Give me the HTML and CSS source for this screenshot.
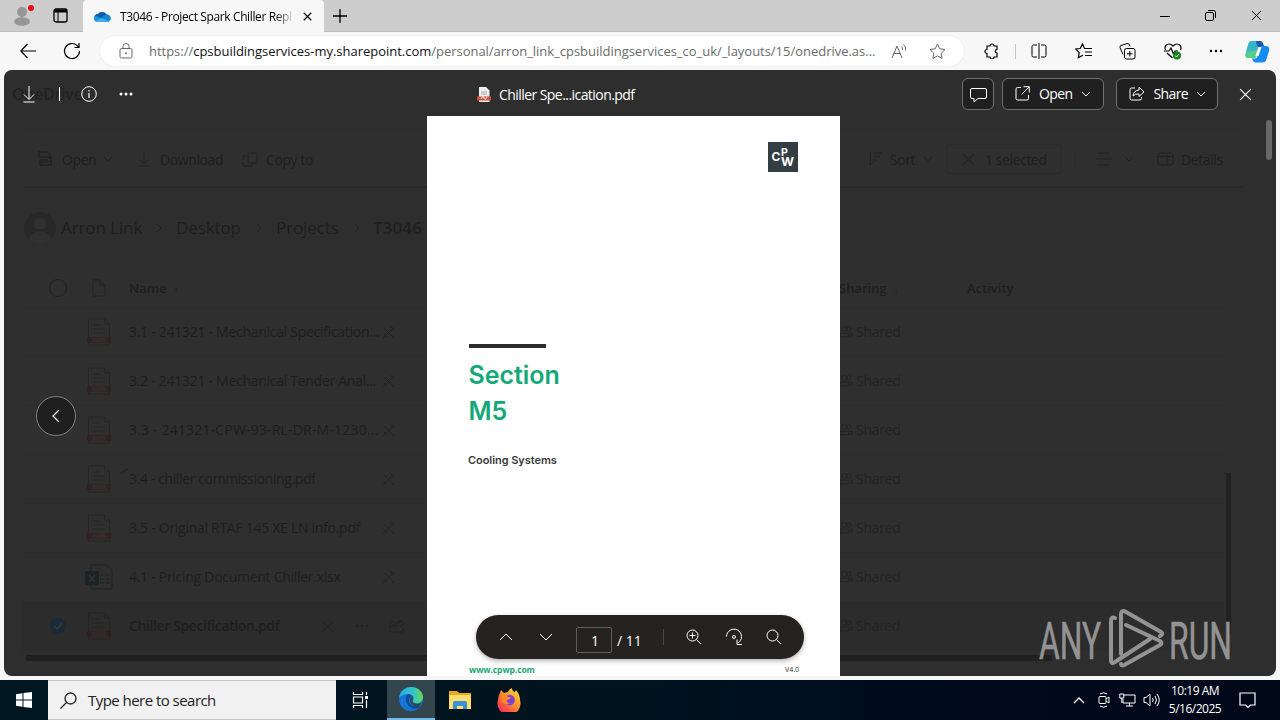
FILE: index.html
```html
<!DOCTYPE html>
<html lang="en">

<head>
    <meta charset="UTF-8">
    <title>T3046 - Project Spark Chiller Repl</title>
    <link rel="stylesheet" href="styles.css">
</head>

<body>
    <svg xmlns="http://www.w3.org/2000/svg" style="display: none;">
        <symbol id="chevron-down" viewBox="0 0 10 10"><path d="M1 3l4 4 4-4"/></symbol>
        <symbol id="chevron-right" viewBox="0 0 10 10"><path d="M3 1l4 4-4 4"/></symbol>
        <symbol id="close" viewBox="0 0 12 12"><path d="M1 1l10 10M11 1L1 11"/></symbol>
        <symbol id="download" viewBox="0 0 16 18"><path d="M8 1v13M3 9.500l5 5 5-5M2.500 17h11"/></symbol>
        <symbol id="pdf" viewBox="0 0 24 28">
            <path d="M1.500 1h16l5 5v21h-21zM17.500 1v5h5M6 7h8M6 11h12M6 15h12"/>
            <path class="pdf-band" d="M0 19h5v6H0zM19 19h5v6h-5z"/>
            <path class="pdf-mark" d="M5 19.500h14v5H5zM8 23c2-3 3-3 4 0s3 1 4-1"/>
        </symbol>
        <symbol id="pen" viewBox="0 0 14 14"><path d="M1 13L12 2M2 3l10 10M8 1l4 4M2 9l3 3"/></symbol>
        <symbol id="people" viewBox="0 0 16 14"><circle cx="6" cy="4" r="3"/><circle cx="11" cy="4" r="2.500"/><path d="M1 13V9h10v4zM12 9h3v3h-3"/></symbol>
    </svg>

    <div class="tabstrip">
        <div class="profile">
            <svg width="18" height="20" viewBox="0 0 18 20"><circle cx="9" cy="6" r="5" fill="#969696"/><ellipse cx="9" cy="15.500" rx="8" ry="4.300" fill="#969696"/></svg>
            <span class="profile-dot"></span>
        </div>
        <svg class="line tab-actions" width="15" height="15" viewBox="0 0 15 15"><rect x="1" y="1" width="13" height="13" rx="2" stroke-width="1.300"/><path d="M1 3h13" stroke-width="3"/><path d="M5 3v11"/></svg>
        <div class="tab">
            <svg width="17" height="12" viewBox="0 0 17 12"><path d="M4 4a5 4.500 0 0 1 8.500.500A3.700 3.700 0 0 1 13 12H4A4 4 0 0 1 4 4z" fill="#1490df"/><path d="M4 4a5 4.500 0 0 1 8.500.500L7 8 1 5.500A4 4 0 0 1 4 4z" fill="#0f5cab"/><path d="M7 8l5.500-3.500A3.700 3.700 0 0 1 16 10z" fill="#1683d3"/><path d="M2 11l5-3 8 3-2 1H4z" fill="#36b0ef"/></svg>
            <span class="tab-title">T3046 - Project Spark Chiller Repl</span>
            <svg class="line" width="9" height="9" stroke-width="1.600"><use href="#close"/></svg>
        </div>
        <svg class="line new-tab" width="14" height="14" viewBox="0 0 14 14"><path d="M7 0v14M0 7h14" stroke-width="1.300"/></svg>
        <div class="window-buttons">
            <svg class="line" width="10" height="10" viewBox="0 0 10 10"><path d="M0 5.500h10"/></svg>
            <svg class="line" width="11" height="11" viewBox="0 0 11 11"><rect x=".5" y="2.500" width="8" height="8" rx="1.500"/><path d="M3 .5h5.500a2 2 0 0 1 2 2V8"/></svg>
            <svg class="line" width="11" height="11"><use href="#close"/></svg>
        </div>
    </div>

    <div class="navbar">
        <svg class="line back" width="16" height="16" viewBox="0 0 16 16"><path d="M16 8H.8M7.500 1L.8 8l6.700 7" stroke-width="1.200"/></svg>
        <svg class="line reload" width="18" height="18" viewBox="0 0 18 18"><path d="M16.500 9a7.500 7.500 0 1 1-2.300-5.400L16 5.500M16 1v4.500h-4.500" stroke-width="1.200"/></svg>
        <div class="address">
            <svg class="line grey" width="14" height="16" viewBox="0 0 14 16"><rect x="1" y="5.500" width="12" height="9.500" rx="1.500"/><path d="M4 5.500V3.500a3 3 0 0 1 6 0v2"/><circle cx="7" cy="10.300" r=".6" fill="#666"/></svg>
            <span class="url">https://<b>cpsbuildingservices-my.sharepoint.com</b>/personal/arron_link_cpsbuildingservices_co_uk/_layouts/15/onedrive.as...</span>
            <svg class="line grey" width="16" height="16" viewBox="0 0 16 16"><path d="M1 15L6 3l5 12M2.800 10.500h6.500M10.500 3.500q1.500 1.500 1 3.500M12.500 1.500q3 2.500 2 6"/></svg>
            <svg class="line grey star" width="17" height="17" viewBox="0 0 17 17"><path d="M8.500 1l2.300 4.800 5.200.7-3.800 3.700.9 5.200-4.600-2.500-4.600 2.500.9-5.200L1 6.500l5.200-.7z"/></svg>
        </div>
        <div class="nav-icons">
            <svg class="line" width="16" height="16" viewBox="0 0 16 16"><path d="M4 3h3a2 2 0 0 1 4 0h3v3.500a1.700 1.700 0 0 0 0 3.500v4H11a2 2 0 0 1-4 0H4v-3.500a2 2 0 1 1 0-4z" stroke-width="1.200"/></svg>
            <span class="nav-sep"></span>
            <svg class="line" width="16" height="16" viewBox="0 0 16 16"><path d="M6 2H2.500Q1 2 1 3.500v9Q1 14 2.500 14H6M10 2h3.500Q15 2 15 3.500v9q0 1.500-1.500 1.500H10M8 0v16"/></svg>
            <svg class="line" width="17" height="16" viewBox="0 0 17 16"><path d="M13 5.500H9.500L7.500 1 5.200 5.500.8 6l3.400 3.600-.9 5L8 12.300M10 9h7M10 12.500h7M12 5.500h5" stroke-width="1.200"/></svg>
            <svg class="line" width="17" height="17" viewBox="0 0 17 17"><rect x="5.500" y="5.500" width="10.500" height="10.500" rx="2"/><path d="M4 11.500L1 4.500Q.5 3 2 2.500L8 .6Q10 0 10.500 2l.5 1.500M10.800 8v5.500M8 10.800h5.500"/></svg>
            <svg class="line" width="18" height="17" viewBox="0 0 18 17"><path d="M1.500 7C0 3.500 2.500 1 5 1c2 0 3 1 4 2 1-1 2-2 4-2 2.500 0 5 2.500 3.500 6M0 8h5l2-3 2.500 6L11 8h3M3 10l5.500 5" stroke-width="1.200"/><circle cx="13" cy="12.500" r="4" fill="#16821a" stroke="none"/><path d="M11 12.500l1.500 1.500 2.500-3" stroke="#fff"/></svg>
            <svg width="14" height="4" viewBox="0 0 14 4"><circle cx="2" cy="2" r="1.200"/><circle cx="7" cy="2" r="1.200"/><circle cx="12" cy="2" r="1.200"/></svg>
            <svg class="copilot" width="25" height="23" viewBox="0 0 25 23">
                <path d="M6 1h9q2.500 0 3.500 4l.8 2H15l-3.500 9.500Q10.500 18 8 18H3Q-.5 18 .8 13L3.500 3Q4.300 1 6 1z" fill="#35b6c6"/>
                <path d="M11 1h4q2.500 0 3.500 4l.8 2H13q-2-4-2-6z" fill="#1958ad"/>
                <path d="M1 12q-1 6 2 6h5q2.500 0 3.500-2L13 10z" fill="#58cc8b"/>
                <path d="M16 6h5q4 0 3 5l-2.500 8q-1 3.500-4 3.500H11q-3 0-4-4h3q2 0 3-3z" fill="#168cf0"/>
                <path d="M13.500 7h3l-3 9h-3z" fill="#fff"/>
            </svg>
        </div>
    </div>

    <div class="viewport">
        <!-- OneDrive folder, dimmed behind the file viewer -->
        <div class="folder">
            <div class="brand">OneDrive</div>
            <div class="commands">
                <svg class="line" width="16" height="16" viewBox="0 0 16 16"><path d="M2 6V1h8l3 3v4M2 6h12v8H3V9h8M3 11h9" stroke-width="1.500"/></svg>
                <span class="cmd-open">Open</span>
                <svg class="line cmd-chev" width="10" height="10"><use href="#chevron-down"/></svg>
                <svg class="line cmd-dl" width="14" height="16"><use href="#download"/></svg>
                <span class="cmd-download">Download</span>
                <svg class="line cmd-cp" width="16" height="15" viewBox="0 0 16 15"><rect x="6" y="1" width="9" height="10" rx="1.500"/><path d="M4 4H1v4M1 10v4h9v-2"/></svg>
                <span class="cmd-copy">Copy to</span>
                <div class="commands-right">
                    <svg class="line" width="14" height="14" viewBox="0 0 14 14"><path d="M2.500 0v13M0 10.500L2.500 13 5 10.500M5 1h9M5 4.500h7M5 8h4"/></svg>
                    <span class="cmd-sort">Sort</span>
                    <svg class="line" width="10" height="10"><use href="#chevron-down"/></svg>
                    <span class="selected-count"><svg class="line" width="13" height="13"><use href="#close"/></svg>1 selected</span>
                    <span class="cmd-sep"></span>
                    <svg class="line" width="16" height="14" viewBox="0 0 16 14"><path d="M1 1h12M0 7h16M1 13h12"/></svg>
                    <svg class="line cmd-view" width="10" height="10"><use href="#chevron-down"/></svg>
                    <svg class="line" width="17" height="14" viewBox="0 0 17 14"><rect x="1" y="1" width="15" height="12" rx="2"/><path d="M10 1v12M1 4.500h15M12 8h2"/></svg>
                    <span class="cmd-details">Details</span>
                </div>
            </div>
            <div class="crumbs">
                <svg width="32" height="32" viewBox="0 0 32 32"><circle cx="16" cy="16" r="16" fill="#282828"/><circle cx="16" cy="12" r="6" fill="#303030"/><path d="M5 27q2-8 11-8t11 8q-5 5-11 5T5 27z" fill="#303030"/></svg>
                <span class="crumb-user">Arron Link</span>
                <svg class="line" width="10" height="10"><use href="#chevron-right"/></svg>
                <span class="crumb-desktop">Desktop</span>
                <svg class="line" width="10" height="10"><use href="#chevron-right"/></svg>
                <span class="crumb-projects">Projects</span>
                <svg class="line" width="10" height="10"><use href="#chevron-right"/></svg>
                <b>T3046</b>
            </div>
            <div class="files">
                <div class="row head">
                    <svg class="line" width="18" height="18" viewBox="0 0 18 18"><circle cx="9" cy="9" r="8.500"/></svg>
                    <svg class="line doc-col" width="14" height="18" viewBox="0 0 14 18"><path d="M1 2q0-1 1-1h6l5 5v10q0 1-1 1H2q-1 0-1-1zM8 1v5h5"/></svg>
                    <span>Name <small>&#8593;</small></span><i></i><span>Sharing <small>&#8595;</small></span><span>Activity</span>
                </div>
                <div class="row"><i></i><svg class="pdf" width="24" height="28"><use href="#pdf"/></svg><span>3.1 - 241321 - Mechanical Specification...</span><svg class="line" width="14" height="14"><use href="#pen"/></svg><span class="shared"><svg class="line" width="14" height="13"><use href="#people"/></svg>Shared</span></div>
                <div class="row"><i></i><svg class="pdf" width="24" height="28"><use href="#pdf"/></svg><span>3.2 - 241321 - Mechanical Tender Anal...</span><svg class="line" width="14" height="14"><use href="#pen"/></svg><span class="shared"><svg class="line" width="14" height="13"><use href="#people"/></svg>Shared</span></div>
                <div class="row"><i></i><svg class="pdf" width="24" height="28"><use href="#pdf"/></svg><span class="wide">3.3 - 241321-CPW-93-RL-DR-M-1230...</span><svg class="line" width="14" height="14"><use href="#pen"/></svg><span class="shared"><svg class="line" width="14" height="13"><use href="#people"/></svg>Shared</span></div>
                <div class="row"><i></i><svg class="pdf" width="24" height="28"><use href="#pdf"/></svg><span class="fresh">3.4 - chiller commissioning.pdf</span><svg class="line" width="14" height="14"><use href="#pen"/></svg><span class="shared"><svg class="line" width="14" height="13"><use href="#people"/></svg>Shared</span></div>
                <div class="row"><i></i><svg class="pdf" width="24" height="28"><use href="#pdf"/></svg><span>3.5 - Original RTAF 145 XE LN info.pdf</span><svg class="line" width="14" height="14"><use href="#pen"/></svg><span class="shared"><svg class="line" width="14" height="13"><use href="#people"/></svg>Shared</span></div>
                <div class="row"><i></i><svg class="xls" width="28" height="28" viewBox="0 0 28 28"><path d="M6 2h15l6 5v19H6zM15 12h4M21 12h4M15 16h4M21 16h4M15 20h4M21 20h4" fill="none" stroke="#222"/><rect y="8" width="14" height="14" rx="1" fill="#1b2425"/><path d="M4 12l6 7M10 12l-6 7" stroke="#343434" stroke-width="1.500"/></svg><span>4.1 - Pricing Document Chiller.xlsx</span><svg class="line" width="14" height="14"><use href="#pen"/></svg><span class="shared"><svg class="line" width="14" height="13"><use href="#people"/></svg>Shared</span></div>
                <div class="row picked"><svg class="tick" width="16" height="16" viewBox="0 0 16 16"><circle cx="8" cy="8" r="8" fill="#1a2a36"/><path d="M4 8l3 3 5-6" fill="none" stroke="#3a3a3a" stroke-width="1.500"/></svg><svg class="pdf" width="24" height="28"><use href="#pdf"/></svg><span>Chiller Specification.pdf</span>
                    <span class="row-tools"><svg class="line" width="14" height="14"><use href="#pen"/></svg><svg class="line" width="14" height="4" viewBox="0 0 14 4"><path d="M1 2h2M6 2h2M11 2h2" stroke-width="2"/></svg><svg class="line" width="16" height="14" viewBox="0 0 16 14"><path d="M5 3H1v10h13V9M1 7h8M5 7q1-4 6-4V1l4 4-4 3V6"/></svg></span>
                    <span class="shared"><svg class="line" width="14" height="13"><use href="#people"/></svg>Shared</span></div>
            </div>
            <div class="scroll-x"></div>
            <div class="scroll-y"></div>
        </div>

        <div class="viewer">
            <div class="viewer-bar">
                <svg class="line" width="16" height="18"><use href="#download"/></svg>
                <span class="bar-sep"></span>
                <svg class="line" width="16" height="16" viewBox="0 0 16 16"><circle cx="8" cy="8" r="7.300"/><path d="M8 7v5M8 4v1.500" stroke-width="1.200"/></svg>
                <svg class="bar-more" width="14" height="4" viewBox="0 0 14 4" fill="#fff"><circle cx="2" cy="2" r="1.500"/><circle cx="7" cy="2" r="1.500"/><circle cx="12" cy="2" r="1.500"/></svg>
                <div class="file-title">
                    <svg width="14" height="15" viewBox="0 0 14 15"><path d="M2 0h7l3.500 3.500V15H2z" fill="#eee"/><path d="M4 5h6M4 7h6" stroke="#aaa"/><path d="M0 9.500h14v4H0z" fill="#cd5136"/><path d="M4 12q2-4 3-1t3-1" fill="none" stroke="#fff"/></svg>
                    <span>Chiller Spe...ication.pdf</span>
                </div>
                <div class="viewer-actions">
                    <button class="btn btn-comment"><svg class="line" width="17" height="16" viewBox="0 0 17 16"><path d="M2 1.500h13q1.500 0 1.500 1.500v7q0 1.500-1.500 1.500H8l-4 3.500v-3.500H2Q.5 11.500.5 10V3Q.5 1.500 2 1.500z"/></svg></button>
                    <button class="btn btn-open"><svg class="line" width="15" height="15" viewBox="0 0 15 15"><path d="M6 1.500H2.500Q1 1.500 1 3v9.500Q1 14 2.500 14H12q1.500 0 1.500-1.500V9M8.500.7h5.800v5.800M14 1L6.500 8.500"/></svg><span>Open</span><svg class="line" width="10" height="10"><use href="#chevron-down"/></svg></button>
                    <button class="btn btn-share"><svg class="line" width="16" height="15" viewBox="0 0 16 15"><path d="M6 2H2.500Q1 2 1 3.500v9Q1 14 2.500 14H11q1.500 0 1.500-1.500V11M4 10q.5-5.500 6-6V1.200l5 4.800-5 4.500V8Q6 7.500 4 10z"/></svg><span>Share</span><svg class="line" width="10" height="10"><use href="#chevron-down"/></svg></button>
                    <svg class="line" width="13" height="13"><use href="#close"/></svg>
                </div>
            </div>
            <div class="paper">
                <svg class="cpw" width="30" height="30" viewBox="0 0 30 30"><rect width="30" height="30" fill="#333d44"/><text x="3.500" y="19" font-size="12">C</text><text x="13" y="14" font-size="10.500">P</text><text x="13" y="24" font-size="11.500" textLength="13" lengthAdjust="spacingAndGlyphs">W</text></svg>
                <div class="rule"></div>
                <h1>Section<br>M5</h1>
                <h2>Cooling Systems</h2>
                <div class="paper-foot"><b>www.cpwp.com</b><span>V4.0</span></div>
            </div>
            <button class="previous"><svg class="line" width="8" height="12" viewBox="0 0 8 12"><path d="M7 0L1 6l6 6" stroke-width="1.200"/></svg></button>
            <div class="pager">
                <svg class="line" width="14" height="14" viewBox="0 0 14 14"><path d="M1 10l6-6 6 6"/></svg>
                <svg class="line pager-down" width="14" height="14" viewBox="0 0 14 14"><path d="M1 4l6 6 6-6"/></svg>
                <span class="page-number">1</span>
                <span class="page-total">/ 11</span>
                <span class="pager-sep"></span>
                <svg class="line" width="16" height="16" viewBox="0 0 16 16"><circle cx="6.500" cy="6.500" r="5.500"/><path d="M10.500 10.500L15 15M3.500 6.500h6M6.500 3.500v6"/></svg>
                <svg class="line pager-rotate" width="18" height="18" viewBox="0 0 18 18"><path d="M1.500 8.500a7.500 7.500 0 1 1 11.500 6.500M12 11.500v5h5"/><circle cx="9" cy="9" r="1.500"/></svg>
                <svg class="line" width="16" height="16" viewBox="0 0 16 16"><circle cx="6.500" cy="6.500" r="5.500"/><path d="M10.500 10.500L15 15"/></svg>
            </div>
            <div class="viewer-scroll"></div>
        </div>

        <svg class="watermark" width="200" height="66" viewBox="0 0 200 66">
            <text x="1" y="52" textLength="62" lengthAdjust="spacingAndGlyphs">ANY</text>
            <text x="131" y="52" textLength="63" lengthAdjust="spacingAndGlyphs">RUN</text>
            <path d="M77 11q-4-2-4 3v39q0 5 4 2l35-23M83 47V8q0-6 5-3l35 20q3 2-1 4M88 18l34 16q3 2 0 4L88 57q-4 3-5 0"/>
        </svg>
    </div>

    <div class="taskbar">
        <div class="start"><svg width="16" height="16" viewBox="0 0 16 16" fill="#fff"><path d="M0 2.200L6.500 1.300v6.200H0zM7.500 1.100L16 0v7.500H7.500zM0 8.500h6.500v6.200L0 13.800zM7.500 8.500H16V16l-8.500-1.100z"/></svg></div>
        <div class="search"><svg class="line" width="17" height="17" viewBox="0 0 17 17"><circle cx="10.500" cy="6.500" r="5.500" stroke-width="1.300"/><path d="M6.500 10.500L.5 16.500" stroke-width="1.300"/></svg><span>Type here to search</span></div>
        <div class="task task-view"><svg class="line" width="17" height="16" viewBox="0 0 17 16"><path d="M1.500 0v2.500h9V0M1.500 16v-2.500h9V16M1.500 5h9v6h-9zM14.500 0v3M14.500 8v8" stroke-width="1.200"/><path d="M13 4h3v3h-3z" fill="#fff" stroke="none"/></svg></div>
        <div class="task active">
            <svg width="24" height="24" viewBox="0 0 24 24">
                <defs><linearGradient id="edge-top"><stop offset="0" stop-color="#24a9e8"/><stop offset=".6" stop-color="#35c5c2"/><stop offset="1" stop-color="#65dc55"/></linearGradient></defs>
                <circle cx="12" cy="12" r="12" fill="#1476d4"/>
                <path d="M0 11C1 4 6 0 12 0c7 0 12 5 12 10 0 4-3 6.500-7 6.500-3 0-4-1.500-3-3 2-4-1-6.500-5-6.500-4 0-7 1-9 4z" fill="url(#edge-top)"/>
                <path d="M9 7c-4 3-3 13 7 15q4-1 6-4-7 3-11-1-3-4 1-8-1-2-3-2z" fill="#114a9a"/>
                <path d="M13 9c2 2 0 4 .5 6q3 3 8 1l1.500.5Q20 20 16 19q-5-1-5-6 0-2 2-4z" fill="#35474e"/>
            </svg>
        </div>
        <div class="task"><svg width="22" height="18" viewBox="0 0 22 18"><path d="M0 0h8l2 2h12v16H0z" fill="#e9a820"/><path d="M0 4h22v14H0z" fill="#ffdc70"/><path d="M4 18v-6q0-2 2-2h10q2 0 2 2v6h-4v-3H8v3z" fill="#3b91d4"/></svg></div>
        <div class="task"><svg width="24" height="24" viewBox="0 0 24 24">
                <defs><linearGradient id="fox" x1="1" y1="0" x2=".2" y2="1"><stop offset="0" stop-color="#ffe83d"/><stop offset=".45" stop-color="#ff9827"/><stop offset="1" stop-color="#f4245c"/></linearGradient></defs>
                <path d="M3 5l1-3 3 3 4-1q1-3 4-4 0 3 3 4l1-2q4 5 4 10a11.500 11.500 0 1 1-22 0q0-4 2-7z" fill="url(#fox)"/><circle cx="12.500" cy="12" r="5.300" fill="#8040d4"/><path d="M5 8q4-2 6 1l3 .5q-1 2-4 2.500-1 3 3 3.500-4 2-7-1-2-3-1-6.500z" fill="#ff8b22"/></svg></div>
        <div class="tray">
            <svg class="line" width="12" height="8" viewBox="0 0 12 8"><path d="M1 7l5-5 5 5" stroke-width="1.300"/></svg>
            <svg class="line tray-cam" width="12" height="16" viewBox="0 0 12 16"><rect x="1" y="4.500" width="7" height="7" rx="1"/><path d="M8 7l3-2v6L8 9M2 2q3.500-2.500 7 0M2 14q3.500 2.500 7 0"/></svg>
            <svg class="line tray-net" width="17" height="14" viewBox="0 0 17 14"><path d="M5 2h11v8H4V6M7 13h7M10.500 10v3M.8 1h4v4h-4zM2.800 5v5"/></svg>
            <svg class="line tray-vol" width="17" height="14" viewBox="0 0 17 14"><path d="M1 4.500h2L7 1v12L3 9.500H1zM9.500 5q1.500 2 0 4M12 3q3 4 0 8M14 1q4.500 6 0 12"/></svg>
            <div class="clock">10:19 AM<br>5/16/2025</div>
            <svg class="line tray-note" width="17" height="17" viewBox="0 0 17 17"><path d="M1 1h15v12h-4.500L9 15.500 6.500 13H1z" stroke-width="1.200"/></svg>
        </div>
    </div>
</body>

</html>
```
FILE: styles.css
```css
body,
html {
    margin: 0;
    height: 100%;
    overflow: hidden;
    font-family: 'Open Sans', 'Noto Sans', sans-serif;
    font-size: 13px;
    background: #f7f7f7;
}

* {
    box-sizing: border-box;
}

body {
    display: flex;
    flex-direction: column;
}

svg {
    flex: none;
}

.line {
    fill: none;
    stroke: currentColor;
}

/* browser chrome */
.tabstrip {
    display: flex;
    align-items: center;
    height: 32px;
    background: #cdcdcd;
    border-bottom: 1px solid #bdbdbd;
}

.profile {
    position: relative;
    display: flex;
    margin-left: 13px;
}

.profile-dot {
    position: absolute;
    top: -1px;
    right: -3px;
    width: 6px;
    height: 6px;
    border-radius: 50%;
    background: #e80b15;
}

.tab-actions {
    margin-left: 22px;
}

.tab {
    display: flex;
    align-items: center;
    align-self: stretch;
    width: 241px;
    height: 32px;
    margin-left: 15px;
    padding-left: 11px;
    background: #f7f7f7;
    border-radius: 4px 4px 0 0;
}

.tab-title {
    width: 173px;
    margin-left: 9px;
    margin-right: 10px;
    overflow: hidden;
    white-space: nowrap;
    font-size: 12px;
    letter-spacing: -.38px;
    -webkit-mask-image: linear-gradient(90deg, #000 155px, transparent 175px);
    mask-image: linear-gradient(90deg, #000 155px, transparent 175px);
}

.new-tab {
    margin-left: 9px;
}

.window-buttons {
    display: flex;
    align-items: center;
    gap: 35px;
    margin-left: auto;
    margin-right: 18px;
}

.navbar {
    display: flex;
    align-items: center;
    height: 38px;
}

.back {
    margin-left: 20px;
}

.reload {
    margin-left: 27px;
}

.address {
    display: flex;
    align-items: center;
    width: 864px;
    height: 30px;
    margin-left: 19px;
    padding-left: 19px;
    border-radius: 15px;
    background: #fff;
    box-shadow: 0 0 2px #ddd;
}

.grey {
    color: #666;
}

.url {
    width: 728px;
    margin: 0 14px 0 16px;
    white-space: nowrap;
    color: #6b6b6b;
    letter-spacing: -.02px;
}

.url b {
    font-weight: 400;
    color: #111;
}

.star {
    margin-left: 22px;
}

.nav-icons {
    display: flex;
    align-items: center;
    gap: 27.5px;
    margin-left: 19px;
}

.nav-sep {
    width: 1px;
    height: 15px;
    margin: 0 -12px 0 -12px;
    background: #c5c5c5;
}

.copilot {
    margin-left: -6px;
}

/* page area */
.viewport {
    position: relative;
    height: 606px;
    margin: 0 4px 4px;
    overflow: hidden;
    border-radius: 8px;
    background: #2e2e2e;
}

.folder {
    height: 100%;
    color: #1e1e1e;
    font-size: 14px;
}

.folder .line {
    color: #222;
}

.brand {
    height: 62px;
    padding: 12px 0 0 8px;
    font-size: 16px;
    line-height: 24px;
    font-weight: 600;
    letter-spacing: -.3px;
    color: #222;
}

.commands {
    display: flex;
    align-items: center;
    width: 1222px;
    height: 56px;
    margin-left: 18px;
    padding-left: 15px;
    border-radius: 4px;
    border-bottom: 2px solid #2b2b2b;
    background: #2f2f2f;
    letter-spacing: -.4px;
}

.cmd-open {
    width: 34px;
    margin-left: 9px;
}

.cmd-chev {
    margin-left: 7px;
}

.cmd-dl {
    margin-left: 24px;
}

.cmd-download {
    width: 63px;
    margin-left: 9px;
}

.cmd-cp {
    margin-left: 19px;
}

.cmd-copy {
    margin-left: 8px;
}

.commands-right {
    display: flex;
    align-items: center;
    margin-left: auto;
    padding-right: 21px;
}

.cmd-sort {
    width: 26px;
    margin: 0 7px 0 8px;
}

.selected-count {
    display: flex;
    align-items: center;
    gap: 10px;
    width: 116px;
    height: 30px;
    margin: 0 13px;
    padding-left: 15px;
    border: 1px solid #2b2b2b;
    border-radius: 4px;
}

.cmd-sep {
    width: 1px;
    height: 28px;
    margin-right: 20px;
    background: #2b2b2b;
}

.cmd-view {
    margin: 0 23px 0 12px;
}

.cmd-details {
    width: 42px;
    margin-left: 7px;
}

.crumbs {
    display: flex;
    align-items: center;
    height: 76px;
    padding: 3px 0 0 20px;
    font-size: 17px;
    letter-spacing: -.1px;
}

.crumbs span {
    margin-right: 14px;
    white-space: nowrap;
}

.crumbs .line {
    margin-right: 12px;
}

.crumb-user {
    width: 79px;
    margin-left: 5px;
}

.crumb-desktop {
    width: 64px;
}

.crumb-projects {
    width: 62px;
}

.crumbs b {
    margin-left: -1px;
    font-weight: 600;
    letter-spacing: .1px;
}

.files {
    width: 1202px;
    margin-left: 18px;
    border-radius: 4px;
    background: #2f2f2f;
}

.row {
    display: grid;
    grid-template-columns: 39px 42px 253px 457px 128px auto;
    align-items: center;
    height: 49px;
    padding: 0 0 1px 26px;
    border-bottom: 1px solid #2c2c2c;
    letter-spacing: -.28px;
    white-space: nowrap;
}

.head {
    height: 44px;
    padding-top: 5px;
    font-weight: 600;
    font-size: 13px;
    letter-spacing: 0;
}

.head small {
    margin-left: 4px;
    font-size: 8px;
}

.head svg:first-child {
    margin-left: 1px;
}

.doc-col {
    margin-left: 5px;
}

.pdf {
    fill: none;
    stroke: #222;
    opacity: .7;
}

.pdf-band {
    fill: #331c1e;
    stroke: none;
}

.pdf-mark {
    stroke: #3b2223;
}

.xls {
    margin-left: -2px;
}

.wide {
    letter-spacing: .18px;
}

.fresh {
    letter-spacing: -.38px;
}

.fresh::before {
    content: '';
    float: left;
    width: 8px;
    margin: 1px 0 0 -8px;
    border-top: 1px solid #202020;
    transform: rotate(-30deg);
}

.shared {
    display: flex;
    align-items: center;
    gap: 3px;
    color: #232323;
}

.picked {
    background: #2c2c2c;
    font-weight: 600;
    letter-spacing: -.38px;
}

.picked .shared {
    font-weight: 400;
}

.tick {
    margin-left: 2px;
}

.row-tools {
    display: flex;
    align-items: center;
    gap: 20px;
    margin-left: -61px;
}

.scroll-x,
.scroll-y {
    position: absolute;
    background: #212121;
}

.scroll-x {
    left: 22px;
    bottom: 15px;
    width: 1026px;
    height: 6px;
}

.scroll-y {
    right: 45px;
    top: 403px;
    width: 5px;
    height: 162px;
}

/* file viewer laid over the folder */
.viewer {
    position: absolute;
    inset: 0;
    color: #fff;
}

.viewer-bar {
    display: flex;
    align-items: center;
    height: 46px;
    padding: 2px 24px 0 17px;
}

.bar-sep {
    width: 1px;
    height: 14px;
    margin: 0 21px 0 22px;
    background: #fff;
}

.bar-more {
    margin-left: 22px;
}

.file-title {
    display: flex;
    align-items: center;
    gap: 8px;
    margin-left: 344px;
    font-size: 14px;
    letter-spacing: -.56px;
}

.viewer-actions {
    display: flex;
    align-items: center;
    margin-left: auto;
}

.btn {
    display: flex;
    align-items: center;
    justify-content: center;
    height: 32px;
    padding: 0 0 1px;
    border: 1px solid #707070;
    border-radius: 6px;
    background: #202020;
    color: #fff;
    font: 14px 'Open Sans', sans-serif;
    letter-spacing: -.6px;
}

.btn span {
    width: 34px;
    margin: 0 8px 0 9px;
    text-align: left;
}

.btn-comment {
    width: 32px;
    padding: 2px 0 0;
    margin-right: 8px;
}

.btn-open {
    width: 102px;
    margin-right: 12px;
}

.btn-share {
    width: 102px;
    margin-right: 21px;
}

.paper {
    display: flex;
    flex-direction: column;
    width: 413px;
    height: 560px;
    margin-left: 423px;
    padding: 26px 41px 0 42px;
    background: #fff;
    font-family: Inter, sans-serif;
    color: #333;
}

.cpw {
    align-self: flex-end;
    margin-right: 1px;
    font-weight: 700;
    fill: #fff;
}

.rule {
    width: 77px;
    height: 4px;
    margin: 172px 0 0 -.5px;
    background: #2b2c2e;
}

.paper h1 {
    margin: 9px 0 0 -.5px;
    font-size: 25px;
    line-height: 36px;
    font-weight: 600;
    letter-spacing: -.05px;
    color: #14a878;
}

.paper h2 {
    margin: 22px 0 0 -1px;
    font-size: 11px;
    line-height: 18px;
    font-weight: 600;
    letter-spacing: -.05px;
    color: #3b3b3b;
}

.paper-foot {
    display: flex;
    justify-content: space-between;
    margin-top: auto;
    font: 7px/12px 'Open Sans', sans-serif;
}

.paper-foot b {
    color: #1ba679;
    font-size: 8.5px;
    letter-spacing: -.1px;
}

.previous {
    position: absolute;
    left: 32px;
    top: 326px;
    display: flex;
    align-items: center;
    justify-content: center;
    width: 40px;
    height: 40px;
    padding: 0;
    border: 1px solid #858585;
    border-radius: 50%;
    background: #1f1f1f;
    color: #fff;
}

.pager {
    position: absolute;
    left: 472px;
    top: 545px;
    display: flex;
    align-items: center;
    width: 328px;
    height: 44px;
    padding-left: 23px;
    border-radius: 22px;
    background: #252220;
    box-shadow: 0 2px 5px rgba(0, 0, 0, .3);
}

.pager-down {
    margin-left: 26px;
}

.page-number {
    width: 36px;
    height: 26px;
    margin: 6px 0 0 23px;
    padding-left: 2px;
    border: 1px solid #605e5c;
    border-radius: 2px;
    line-height: 25px;
    text-align: center;
    font-size: 14px;
}

.page-total {
    width: 28px;
    margin: 6px 0 0 5px;
    font-size: 14px;
    white-space: nowrap;
}

.pager-sep {
    width: 1px;
    height: 16px;
    margin: 0 22px 0 18px;
    background: #484644;
}

.pager-rotate {
    margin: 0 23px;
}

.viewer-scroll {
    position: absolute;
    right: 4px;
    top: 50px;
    width: 6px;
    height: 40px;
    border-radius: 3px;
    background: #686868;
}

.watermark {
    position: absolute;
    left: 1034px;
    top: 537px;
    overflow: visible;
    fill: #939393;
    font-family: Roboto, sans-serif;
    font-size: 52px;
}

.watermark text {
    stroke: #939393;
    stroke-width: .6px;
}

.watermark path {
    fill: none;
    stroke: #939393;
    stroke-width: 4px;
    stroke-linecap: round;
}

/* windows taskbar */
.taskbar {
    display: flex;
    height: 40px;
    background: linear-gradient(90deg, #001722, #00131f 50%, #000a1b 75%, #000818);
    color: #fff;
}

.start,
.task {
    display: flex;
    align-items: center;
    justify-content: center;
    width: 49px;
}

.start {
    width: 48px;
}

.search {
    display: flex;
    align-items: center;
    width: 288px;
    padding-left: 12px;
    border: solid #c7c7c7;
    border-width: 1px 0;
    background: #f1f1f1;
    color: #222;
    font-size: 15px;
    letter-spacing: -.54px;
}

.search span {
    margin-left: 11px;
}

.task-view {
    width: 51px;
    padding-right: 3px;
}

.active {
    width: 48px;
    border-bottom: 2px solid #76b9ed;
    background: #34464d;
}

.tray {
    display: flex;
    align-items: center;
    margin-left: auto;
    padding-right: 24px;
}

.tray-cam {
    margin-left: 13px;
}

.tray-net {
    margin-left: 9px;
}

.tray-vol {
    margin-left: 7px;
}

.clock {
    width: 62px;
    margin: 0 13px 0 4px;
    font-size: 12px;
    line-height: 18px;
    text-align: center;
    white-space: nowrap;
    letter-spacing: -.5px;
}
```
